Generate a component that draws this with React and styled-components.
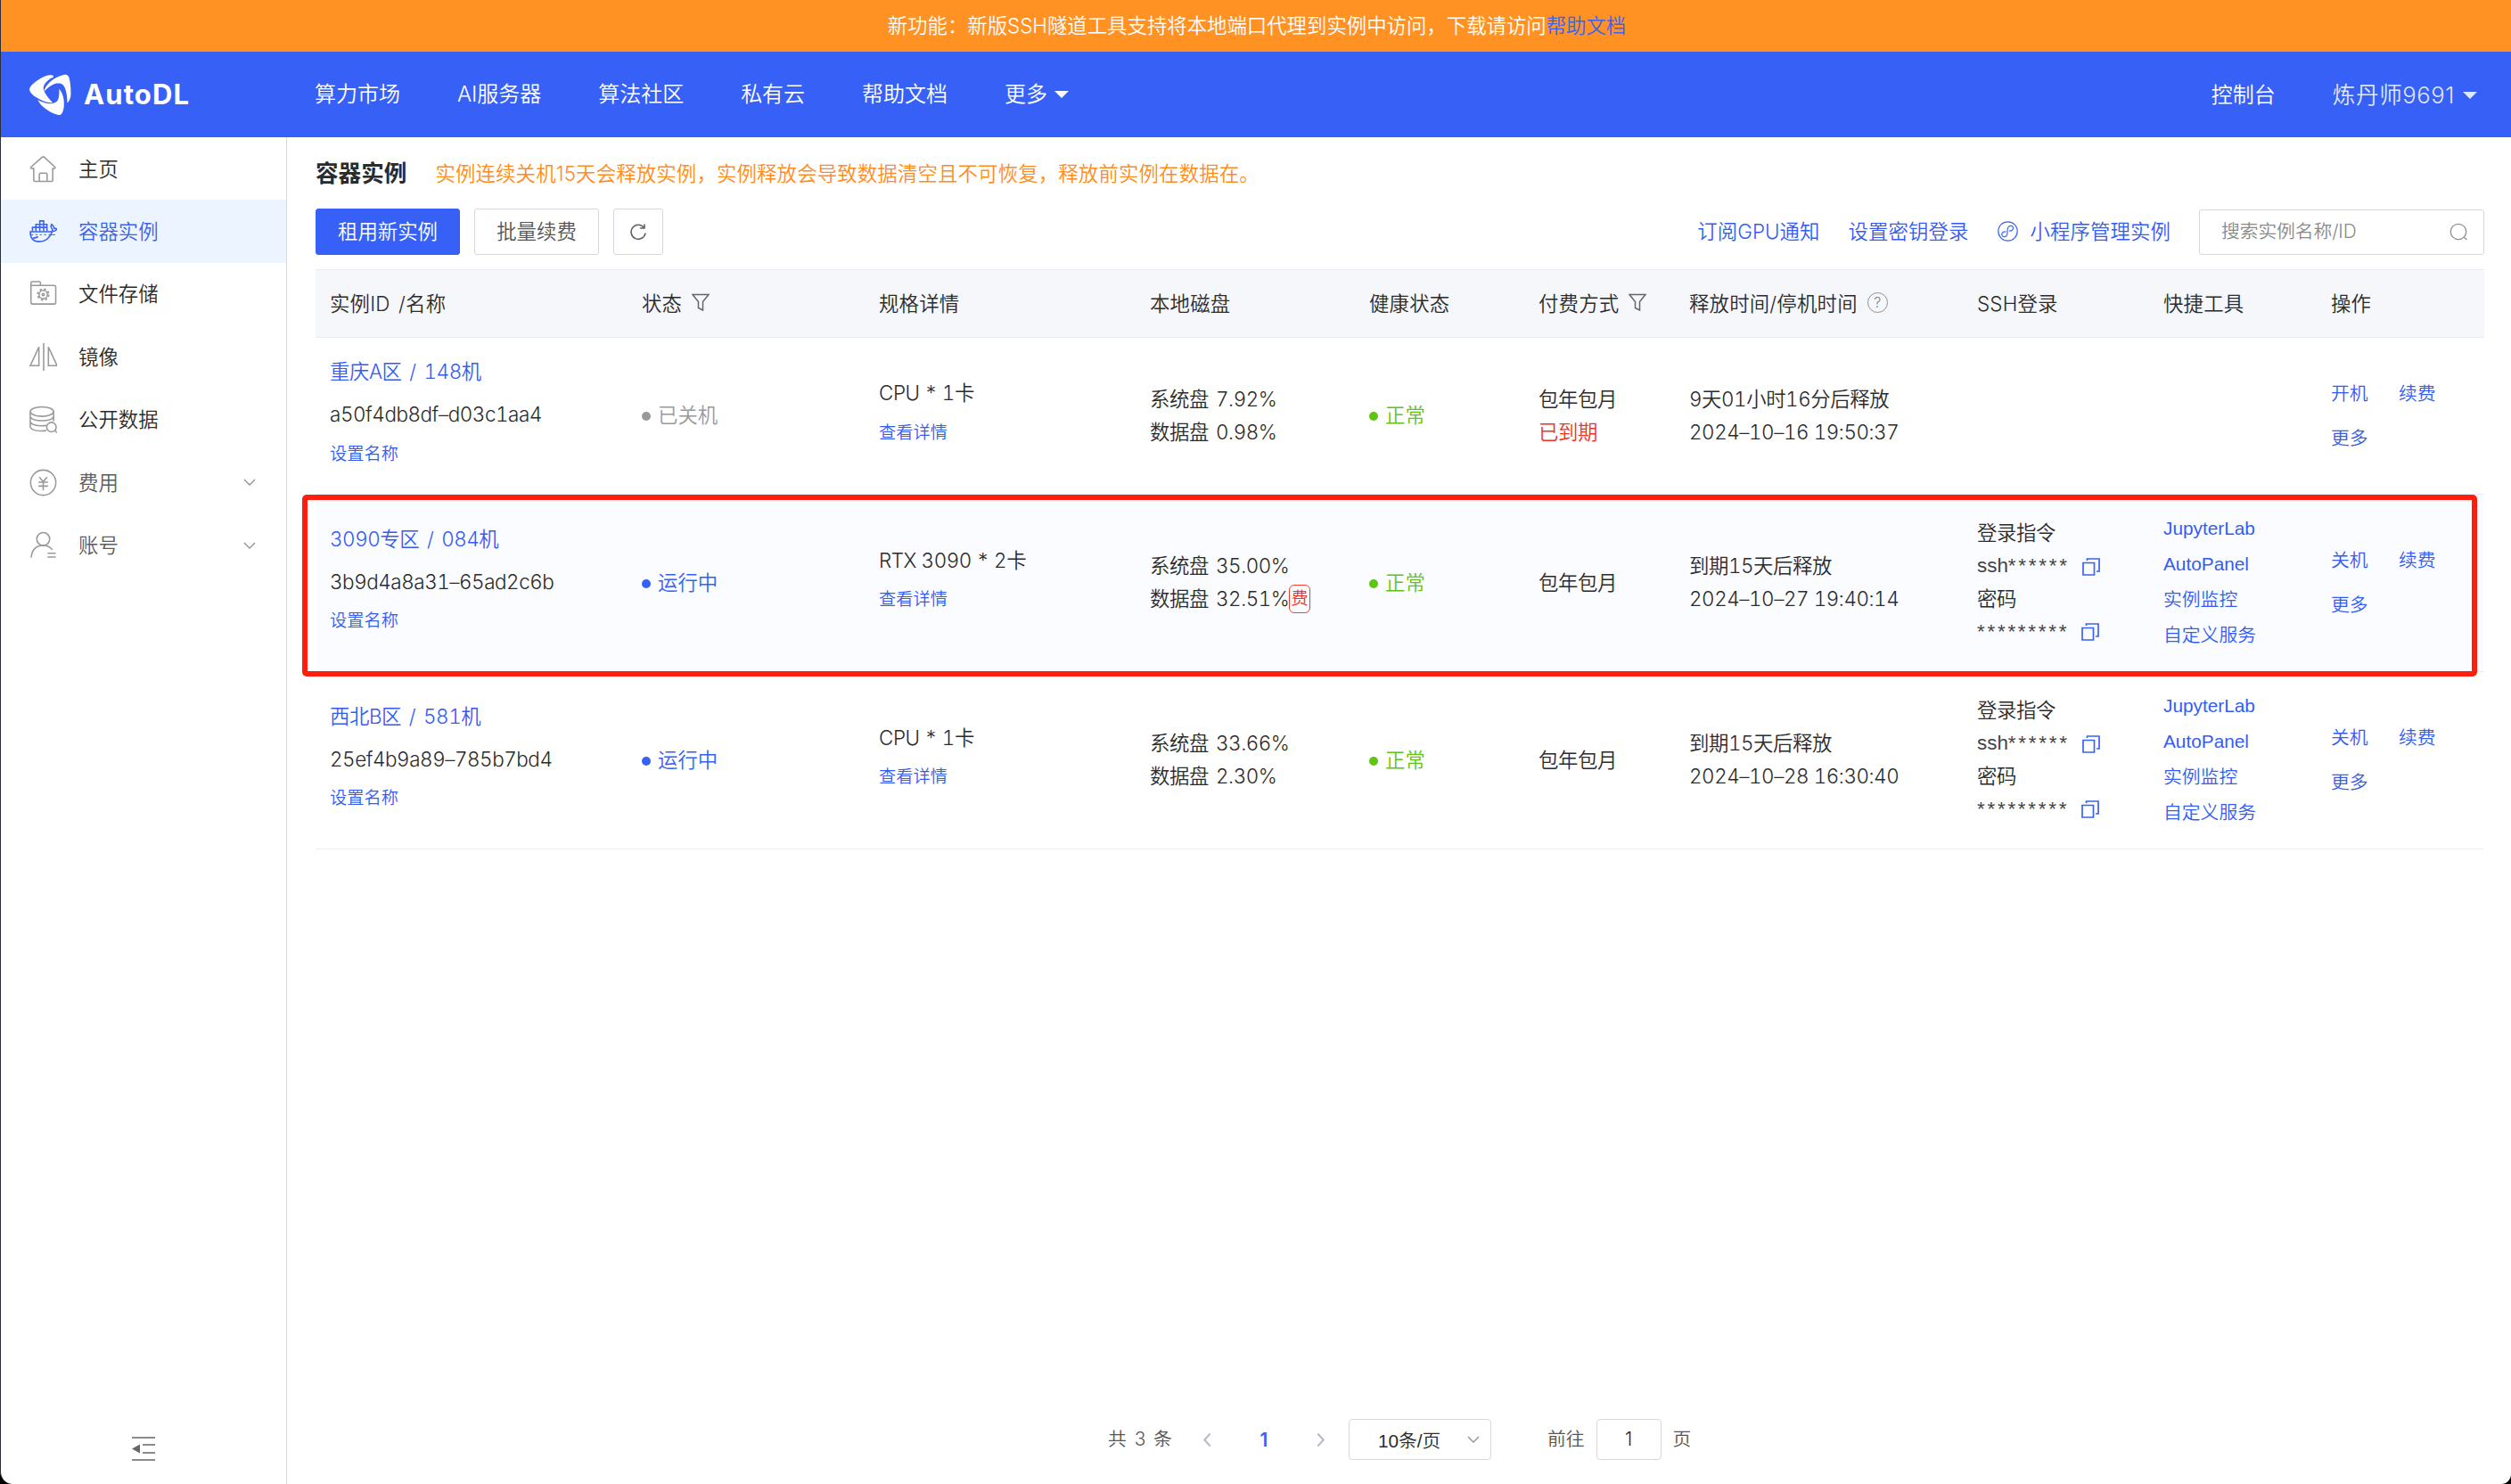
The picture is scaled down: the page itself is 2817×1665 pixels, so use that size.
import React from "react";
import styled, { createGlobalStyle } from "styled-components";

const NAV = ["算力市场", "AI服务器", "算法社区", "私有云", "帮助文档"];

const MENUS = [
  { label: "主页", icon: "home" },
  { label: "容器实例", icon: "docker", active: true },
  { label: "文件存储", icon: "folder" },
  { label: "镜像", icon: "mirror" },
  { label: "公开数据", icon: "data" },
  { label: "费用", icon: "fee", sub: true },
  { label: "账号", icon: "user", sub: true },
];

const TOOLS = ["JupyterLab", "AutoPanel", "实例监控", "自定义服务"];

const INSTANCES = [
  {
    name: "重庆A区 / 148机",
    id: "a50f4db8df–d03c1aa4",
    status: "已关机",
    running: false,
    spec: "CPU * 1卡",
    system: "7.92%",
    data: "0.98%",
    expired: true,
    release: "9天01小时16分后释放",
    date: "2024–10–16 19:50:37",
    power: "开机",
  },
  {
    name: "3090专区 / 084机",
    id: "3b9d4a8a31–65ad2c6b",
    status: "运行中",
    running: true,
    spec: "RTX 3090 * 2卡",
    system: "35.00%",
    data: "32.51%",
    paid: true,
    release: "到期15天后释放",
    date: "2024–10–27 19:40:14",
    power: "关机",
    marked: true,
  },
  {
    name: "西北B区 / 581机",
    id: "25ef4b9a89–785b7bd4",
    status: "运行中",
    running: true,
    spec: "CPU * 1卡",
    system: "33.66%",
    data: "2.30%",
    release: "到期15天后释放",
    date: "2024–10–28 16:30:40",
    power: "关机",
  },
];

const GlobalStyle = createGlobalStyle`
  * {
    box-sizing: border-box;
  }
  body {
    margin: 0;
    font-family: Inter, "Noto Sans CJK SC", sans-serif;
    font-weight: 350;
    font-size: 22.4px;
    color: #2b2b2b;
  }
  svg {
    display: block;
    flex-shrink: 0;
  }
`;

const Window = styled.div`
  width: 2817px;
  height: 1665px;
  background: #000;
  overflow: hidden;
`;

const Page = styled.div`
  display: flex;
  flex-direction: column;
  height: 100%;
  background: #fff;
  border-left: 1px solid #2b3038;
  border-radius: 0 0 11px 14px;
  overflow: hidden;
`;

const Notice = styled.div`
  height: 58px;
  padding: 1px 0 0 2px;
  line-height: 56px;
  text-align: center;
  color: #fff;
  background: #ff9222;
`;

const NoticeLink = styled.a`
  color: #3a62f5;
`;

const Header = styled.header`
  display: flex;
  align-items: center;
  height: 96px;
  padding-right: 38px;
  background: #3761f6;
  color: #fff;
  font-size: 24px;
`;

const Brand = styled.div`
  display: flex;
  align-items: center;
  gap: 14px;
  width: 352px;
  padding-left: 31px;
`;

const BrandName = styled.span`
  padding-bottom: 2px;
  font-size: 31px;
  font-weight: 700;
  letter-spacing: 1.1px;
`;

const Nav = styled.nav`
  display: flex;
  gap: 63.9px;
  padding-bottom: 5px;
`;

const Dropdown = styled.span`
  display: flex;
  align-items: center;
  gap: 8px;
  &::after {
    content: "";
    margin-top: 5px;
    border: 8px solid transparent;
    border-top: 8px solid currentColor;
    border-bottom: 0;
  }
`;

const Account = styled.div`
  display: flex;
  align-items: center;
  gap: 64px;
  margin-left: auto;
  padding-bottom: 4px;
`;

const UserName = styled(Dropdown)`
  gap: 9px;
  font-size: 25.6px;
  letter-spacing: 0.6px;
  color: rgba(255, 255, 255, 0.85);
`;

const Body = styled.div`
  display: flex;
  flex: 1;
`;

const Sidebar = styled.aside`
  display: flex;
  flex-direction: column;
  width: 321px;
  border-right: 1px solid #d9dadd;
`;

const MenuSvg = styled.svg`
  width: 33px;
  height: 33px;
  padding: 1px;
  fill: none;
  stroke: #999;
  stroke-width: 1.6;
`;

const Menu = styled.div`
  display: flex;
  align-items: center;
  height: 70.4px;
  padding: 0 33px 0 31px;
  background: ${({ $active }) => ($active ? "#ecf5ff" : "#fff")};
  color: ${({ $active, $sub }) => ($active ? "#3a62f5" : $sub ? "#5c5c5c" : "#2b2b2b")};
  ${MenuSvg} {
    stroke: ${({ $active }) => ($active ? "#3a62f5" : "#999")};
  }
`;

const MenuLabel = styled.span`
  flex: 1;
  margin-left: 23px;
  padding-bottom: 3px;
`;

const Collapse = styled.div`
  margin: auto auto 26px 147px;
`;

const Main = styled.main`
  display: flex;
  flex-direction: column;
  flex: 1;
  padding: 0 30px 27px 32px;
`;

const TitleBar = styled.div`
  display: flex;
  align-items: center;
  height: 80px;
  padding-bottom: 2px;
  gap: 32px;
`;

const Title = styled.h1`
  margin: 0;
  padding-bottom: 1px;
  font-size: 25.6px;
  font-weight: 700;
`;

const Warning = styled.span`
  color: #ff8c1a;
  letter-spacing: 0.16px;
`;

const Toolbar = styled.div`
  display: flex;
  align-items: center;
  height: 52px;
  margin-bottom: 16px;
`;

const Button = styled.button`
  display: flex;
  align-items: center;
  justify-content: center;
  width: ${({ $width }) => $width}px;
  height: 52px;
  margin-right: 16px;
  padding: 0 0 4px;
  border: 1px solid ${({ $primary }) => ($primary ? "#3761f6" : "#d5d8df")};
  border-radius: 3px;
  background: ${({ $primary }) => ($primary ? "#3761f6" : "#fff")};
  color: ${({ $primary }) => ($primary ? "#fff" : "#555")};
  font: inherit;
  svg {
    margin-top: 5px;
  }
`;

const Spacer = styled.div`
  flex: 1;
`;

const ToolLink = styled.a`
  display: flex;
  align-items: center;
  gap: 14px;
  margin-right: 32px;
  padding-bottom: 4px;
  letter-spacing: 0.1px;
  color: #345cf5;
  svg {
    margin-top: 2px;
  }
`;

const Search = styled.div`
  display: flex;
  align-items: center;
  justify-content: space-between;
  width: 320px;
  height: 51px;
  padding: 0 17px 0 24px;
  border: 1px solid #d5d8df;
  border-radius: 3px;
`;

const Placeholder = styled.span`
  padding-bottom: 4px;
  font-size: 20.8px;
  letter-spacing: -0.1px;
  color: #8a8a8a;
`;

const Grid = styled.div`
  display: grid;
  grid-template-columns: 350px 266px 304px 246px 190px 169px 323px 209px 188px 188px;
`;

const TableHead = styled(Grid)`
  height: 77px;
  background: #f5f7fb;
  border-top: 1px solid #e8ebf2;
  border-bottom: 1px solid #e8ebf2;
`;

const HeadCell = styled.div`
  display: flex;
  align-items: center;
  gap: 11px;
  padding: 0 0 4px 16px;
  letter-spacing: 0.2px;
  word-spacing: 3px;
`;

const FilterSvg = styled.svg`
  width: 20px;
  height: 21px;
  margin-top: 2px;
  fill: none;
  stroke: #666;
  stroke-width: 1.5;
`;

const Help = styled.span`
  width: 23px;
  height: 23px;
  margin-top: 2px;
  border: 1.5px solid #909090;
  border-radius: 50%;
  color: #808080;
  font-size: 16px;
  line-height: 20px;
  text-align: center;
`;

const TableRow = styled(Grid)`
  position: relative;
  height: ${({ $tall }) => ($tall ? 199 : 176)}px;
  border-bottom: 1px solid #ebeef5;
  background: ${({ $marked }) => ($marked ? "#fafcff" : "#fff")};
`;

// highlight frame around the picked instance
const Frame = styled.div`
  position: absolute;
  inset: 0 8px -6px -15px;
  border: 6px solid #ff1d0d;
  border-radius: 5px;
  z-index: 1;
`;

const Cell = styled.div`
  display: flex;
  flex-direction: column;
  justify-content: center;
  padding: 0 0 ${({ $lift = 0 }) => $lift}px 16px;
  white-space: nowrap;
  font-variant-numeric: tabular-nums;
  letter-spacing: -0.42px;
`;

const Text = styled.div`
  display: flex;
  align-items: center;
  height: 36.8px;
  margin-top: ${({ $top = 0 }) => $top}px;
  line-height: 36.8px;
  white-space: pre;
  color: ${({ $color = "#2b2b2b" }) => $color};
  word-spacing: ${({ $word = 0 }) => $word}px;
`;

const SmallLink = styled.a`
  margin-top: 10px;
  line-height: 31px;
  font-size: 19.2px;
  letter-spacing: 0.1px;
  color: #345cf5;
`;

const Status = styled(Text)`
  gap: 8px;
  letter-spacing: 0;
  &::before {
    content: "";
    width: 10px;
    height: 10px;
    margin-top: 2px;
    border-radius: 50%;
    background: ${({ $color }) => $color};
  }
`;

const Badge = styled.span`
  width: 24px;
  height: 32px;
  border: 1px solid #f5402f;
  border-radius: 6px;
  color: #f5301f;
  font-size: 19.2px;
  line-height: 28px;
  letter-spacing: 0;
  text-indent: 1px;
`;

const Secret = styled(Text)`
  font-family: "Liberation Sans", sans-serif;
  letter-spacing: 0;
  color: #444;
`;

const Stars = styled.span`
  letter-spacing: 2.75px;
`;

const CopySvg = styled.svg`
  width: 20px;
  height: 20px;
  margin-left: 14px;
  fill: none;
  stroke: #3a62f5;
  stroke-width: 1.7;
`;

const Tool = styled.a`
  position: relative;
  line-height: 40px;
  font-family: "Liberation Sans", "Noto Sans CJK SC", sans-serif;
  font-size: 20.8px;
  letter-spacing: 0;
  color: #345cf5;
`;

const Tools = styled.div`
  display: flex;
  flex-direction: column;
  padding-bottom: 2px;
`;

const Actions = styled.div`
  display: grid;
  grid-template-columns: 76px 76px;
  row-gap: 18px;
  line-height: 32px;
  font-size: 20.8px;
  letter-spacing: 0;
  color: #345cf5;
`;

const Pager = styled.div`
  display: flex;
  align-items: center;
  margin-top: auto;
  margin-left: 889px;
  font-size: 20.8px;
  color: #555;
`;

const PagerText = styled.span`
  padding-bottom: 4px;
  word-spacing: 3px;
`;

const Arrow = styled.span`
  margin: 0 ${({ $right }) => $right}px 0 ${({ $left }) => $left}px;
`;

const Current = styled.b`
  width: 56px;
  text-align: center;
  color: #3a62f5;
  font-weight: 600;
`;

const Select = styled.div`
  display: flex;
  align-items: center;
  justify-content: space-between;
  width: 160px;
  height: 46px;
  margin-right: 63px;
  padding: 0 11px 1px 32px;
  border: 1px solid #d5d8df;
  border-radius: 4px;
  color: #2b2b2b;
  font-family: "Liberation Sans", "Noto Sans CJK SC", sans-serif;
`;

const PageInput = styled.div`
  width: 73px;
  height: 46px;
  margin: 0 13px;
  border: 1px solid #d5d8df;
  border-radius: 4px;
  line-height: 43px;
  text-align: center;
  color: #2b2b2b;
`;

const Logo = () => (
  <svg width="48" height="47" viewBox="36 36 144 141" fill="#fff">
    <path d="M40 92C37 84 44 75 55 66C72 52 92 41 108 40C118 39 122 42 119 47C104 52 88 68 86 82C85 93 100 116 117 132C108 134 92 131 82 125C62 116 44 104 40 92Z" />
    <path d="M88 95C92 74 120 46 154 39C166 36 172 42 174 54C178 74 179 96 178 110C176 120 172 130 166 133C167 112 162 82 152 73C146 66 130 66 118 72C104 79 96 88 88 95Z" />
    <path d="M67 123C84 134 110 139 124 133C138 128 140 110 139 86C150 96 158 122 155 146C153 164 147 176 136 174C112 168 78 148 67 123Z" />
  </svg>
);

const MenuIcon = ({ name }) => (
  <MenuSvg viewBox="0 0 32 32">
    {name === "home" && (
      <path d="M5 15.500V29q0 1.500 1.500 1.500h19q1.500 0 1.500-1.500V15.500h2.200q1.200-.8.2-1.800L17.300 2.500q-1.300-1.200-2.600 0L2 13.700q-1 1 .2 1.800zM11.500 30V22.500q0-1.500 1.500-1.500h6q1.500 0 1.500 1.500V30" />
    )}
    {name === "docker" && (
      <>
        <path d="M1 16.500h24.500q1.500-1 1-3-2.500-2.500-.8-5.500 2.500 1.500 3 4.500 2 0 3.300.8-1.500 2.700-5.500 3Q22 28 11.500 28 1 28 1 16.500Z" />
        <path d="M3.500 16V11.500h16.800V16M7.500 16V8h12.800v4M12 16V4h4.500v12M20.300 12v4" />
        <path d="M2 20h2.500M7 20h2.500M12 20h2.500M17 20h2.500M22 20h8" strokeWidth="1" />
        <path d="M4 24q4-.5 6-1.800" />
      </>
    )}
    {name === "folder" && (
      <>
        <path d="M1.800 6.500V3.500q0-1.500 1.500-1.500h8q1.500 0 1.500 1.500v3M1.800 6.500h26.700q2 0 2 2V26q0 2-2 2H3.800q-2 0-2-2z" />
        <circle cx="16" cy="17" r="4.800" />
        <circle cx="16" cy="17" r="1.300" />
        <circle cx="16" cy="17" r="6.300" strokeDasharray="2.500 2.450" strokeWidth="2" />
      </>
    )}
    {name === "mirror" && <path d="M16.500 0v32M11 4.500V26H1zM22 4.500V26h10z" />}
    {name === "data" && (
      <>
        <ellipse cx="14.500" cy="7" rx="13.500" ry="5.500" />
        <path d="M1 7v18q2 4.500 13.500 4.500 3 0 5-.5M28 7v11M1 13q2 4.500 13.500 4.500T28 13M1 19q2 4.500 13.500 4.500 3 0 5-.5" />
        <circle cx="25.500" cy="25" r="5.500" />
        <path d="M29.500 29l2.500 2.500" />
      </>
    )}
    {name === "fee" && (
      <>
        <circle cx="16" cy="16" r="14.600" />
        <path d="M11.500 9.500L16 15l4.500-5.500M10.500 15.500h11M10.500 20h11M16 15v10" />
      </>
    )}
    {name === "user" && (
      <>
        <circle cx="16" cy="9" r="7.500" />
        <path d="M2 30.500Q3.500 16.500 16 16.500q7 0 10.500 5M21 25.500h9.500M21 30h9.500" />
      </>
    )}
  </MenuSvg>
);

const Chevron = ({ size = 16, color = "#909090", d = "M2 5l6 6 6-6", w = 1.3 }) => (
  <svg width={size} height={size} viewBox="0 0 16 16" fill="none" stroke={color} strokeWidth={w}>
    <path d={d} />
  </svg>
);

const Filter = () => (
  <FilterSvg viewBox="0 0 20 21">
    <path d="M1 1.500h18L12.500 9.500V19L7.500 16.500V9.500z" />
  </FilterSvg>
);

const Copy = () => (
  <CopySvg viewBox="0 0 20 20">
    <path d="M1 5.500h12.500V19H1zM5.500 3V1H19v14h-3" />
  </CopySvg>
);

const InstanceRow = ({ item }) => (
  <TableRow $marked={item.marked} $tall={item.running}>
    {item.marked && <Frame />}
    <Cell $lift={9}>
      <Text $color="#345cf5" $word={3.2}>
        {item.name}
      </Text>
      <Text $top={11.2}>{item.id}</Text>
      <SmallLink>设置名称</SmallLink>
    </Cell>
    <Cell>
      <Status $color={item.running ? "#3761f6" : "#999"}>{item.status}</Status>
    </Cell>
    <Cell $lift={9}>
      <Text>{item.spec}</Text>
      <SmallLink>查看详情</SmallLink>
    </Cell>
    <Cell>
      <Text $word={2.5}>系统盘 {item.system}</Text>
      <Text $word={2.5}>
        数据盘 {item.data}
        {item.paid && <Badge>费</Badge>}
      </Text>
    </Cell>
    <Cell>
      <Status $color="#5fc412">正常</Status>
    </Cell>
    <Cell>
      <Text>包年包月</Text>
      {item.expired && <Text $color="#f5301f">已到期</Text>}
    </Cell>
    <Cell>
      <Text>{item.release}</Text>
      <Text>{item.date}</Text>
    </Cell>
    <Cell>
      {item.running && (
        <>
          <Text>登录指令</Text>
          <Secret>
            ssh<Stars>******</Stars>
            <Copy />
          </Secret>
          <Text>密码</Text>
          <Secret>
            <Stars>*********</Stars>
            <Copy />
          </Secret>
        </>
      )}
    </Cell>
    <Cell>
      {item.running && (
        <Tools>
          {TOOLS.map((tool) => (
            <Tool key={tool}>{tool}</Tool>
          ))}
        </Tools>
      )}
    </Cell>
    <Cell>
      <Actions>
        <span>{item.power}</span>
        <span>续费</span>
        <span>更多</span>
      </Actions>
    </Cell>
  </TableRow>
);

const App = () => (
  <>
    <GlobalStyle />
    <Window>
      <Page>
        <Notice>
          新功能：新版SSH隧道工具支持将本地端口代理到实例中访问，下载请访问
          <NoticeLink>帮助文档</NoticeLink>
        </Notice>
        <Header>
          <Brand>
            <Logo />
            <BrandName>AutoDL</BrandName>
          </Brand>
          <Nav>
            {NAV.map((nav) => (
              <span key={nav}>{nav}</span>
            ))}
            <Dropdown>更多</Dropdown>
          </Nav>
          <Account>
            <span>控制台</span>
            <UserName>炼丹师9691</UserName>
          </Account>
        </Header>
        <Body>
          <Sidebar>
            {MENUS.map((menu) => (
              <Menu key={menu.label} $active={menu.active} $sub={menu.sub}>
                <MenuIcon name={menu.icon} />
                <MenuLabel>{menu.label}</MenuLabel>
                {menu.sub && <Chevron />}
              </Menu>
            ))}
            <Collapse>
              <svg width="26" height="27" viewBox="0 0 26 27">
                <path d="M0 1h26M12 9h14M12 18h14M0 26h26" stroke="#666" strokeWidth="1.500" />
                <path d="M0 13.500L9 8.500v10z" fill="#666" />
              </svg>
            </Collapse>
          </Sidebar>
          <Main>
            <TitleBar>
              <Title>容器实例</Title>
              <Warning>
                实例连续关机15天会释放实例，实例释放会导致数据清空且不可恢复，释放前实例在数据在。
              </Warning>
            </TitleBar>
            <Toolbar>
              <Button $primary $width={162}>
                租用新实例
              </Button>
              <Button $width={140}>批量续费</Button>
              <Button $width={56}>
                <svg width="20" height="20" viewBox="0 0 20 20" fill="none" stroke="#606266" strokeWidth="1.600">
                  <path d="M16.500 4.500A8 8 0 1 0 18 10.500M12 5h5V.5" />
                </svg>
              </Button>
              <Spacer />
              <ToolLink>订阅GPU通知</ToolLink>
              <ToolLink>设置密钥登录</ToolLink>
              <ToolLink>
                <svg width="23" height="23" viewBox="0 0 23 23" fill="none" stroke="#3a62f5" strokeWidth="1.200">
                  <circle cx="11.500" cy="11.500" r="10.700" />
                  <path d="M9.500 12c-3-.5-5 1.500-4.700 3.500.4 2.800 4.500 2.800 5.700.3C11.700 13 10.300 9.500 11.800 7c1.500-2.500 5.500-2.200 5.700.5.200 2-1.700 4-4.500 3.500" />
                </svg>
                小程序管理实例
              </ToolLink>
              <Search>
                <Placeholder>搜索实例名称/ID</Placeholder>
                <svg width="21" height="21" viewBox="0 0 21 21" fill="none" stroke="#909090" strokeWidth="1.300">
                  <circle cx="10" cy="10" r="8.700" />
                  <path d="M16 16l3.500 3" />
                </svg>
              </Search>
            </Toolbar>
            <TableHead>
              <HeadCell>实例ID /名称</HeadCell>
              <HeadCell>
                状态 <Filter />
              </HeadCell>
              <HeadCell>规格详情</HeadCell>
              <HeadCell>本地磁盘</HeadCell>
              <HeadCell>健康状态</HeadCell>
              <HeadCell>
                付费方式 <Filter />
              </HeadCell>
              <HeadCell>
                释放时间/停机时间 <Help>?</Help>
              </HeadCell>
              <HeadCell>SSH登录</HeadCell>
              <HeadCell>快捷工具</HeadCell>
              <HeadCell>操作</HeadCell>
            </TableHead>
            {INSTANCES.map((item) => (
              <InstanceRow key={item.id} item={item} />
            ))}
            <Pager>
              <PagerText>共 3 条</PagerText>
              <Arrow $left={31} $right={27}>
                <Chevron size={17} color="#b4bccc" w={2} d="M11 1.500L5 8l6 6.500" />
              </Arrow>
              <Current>1</Current>
              <Arrow $left={27} $right={23}>
                <Chevron size={17} color="#b4bccc" w={2} d="M5 1.500L11 8l-6 6.500" />
              </Arrow>
              <Select>
                <span>10条/页</span>
                <Chevron />
              </Select>
              <PagerText>前往</PagerText>
              <PageInput>1</PageInput>
              <PagerText>页</PagerText>
            </Pager>
          </Main>
        </Body>
      </Page>
    </Window>
  </>
);

export default App;
